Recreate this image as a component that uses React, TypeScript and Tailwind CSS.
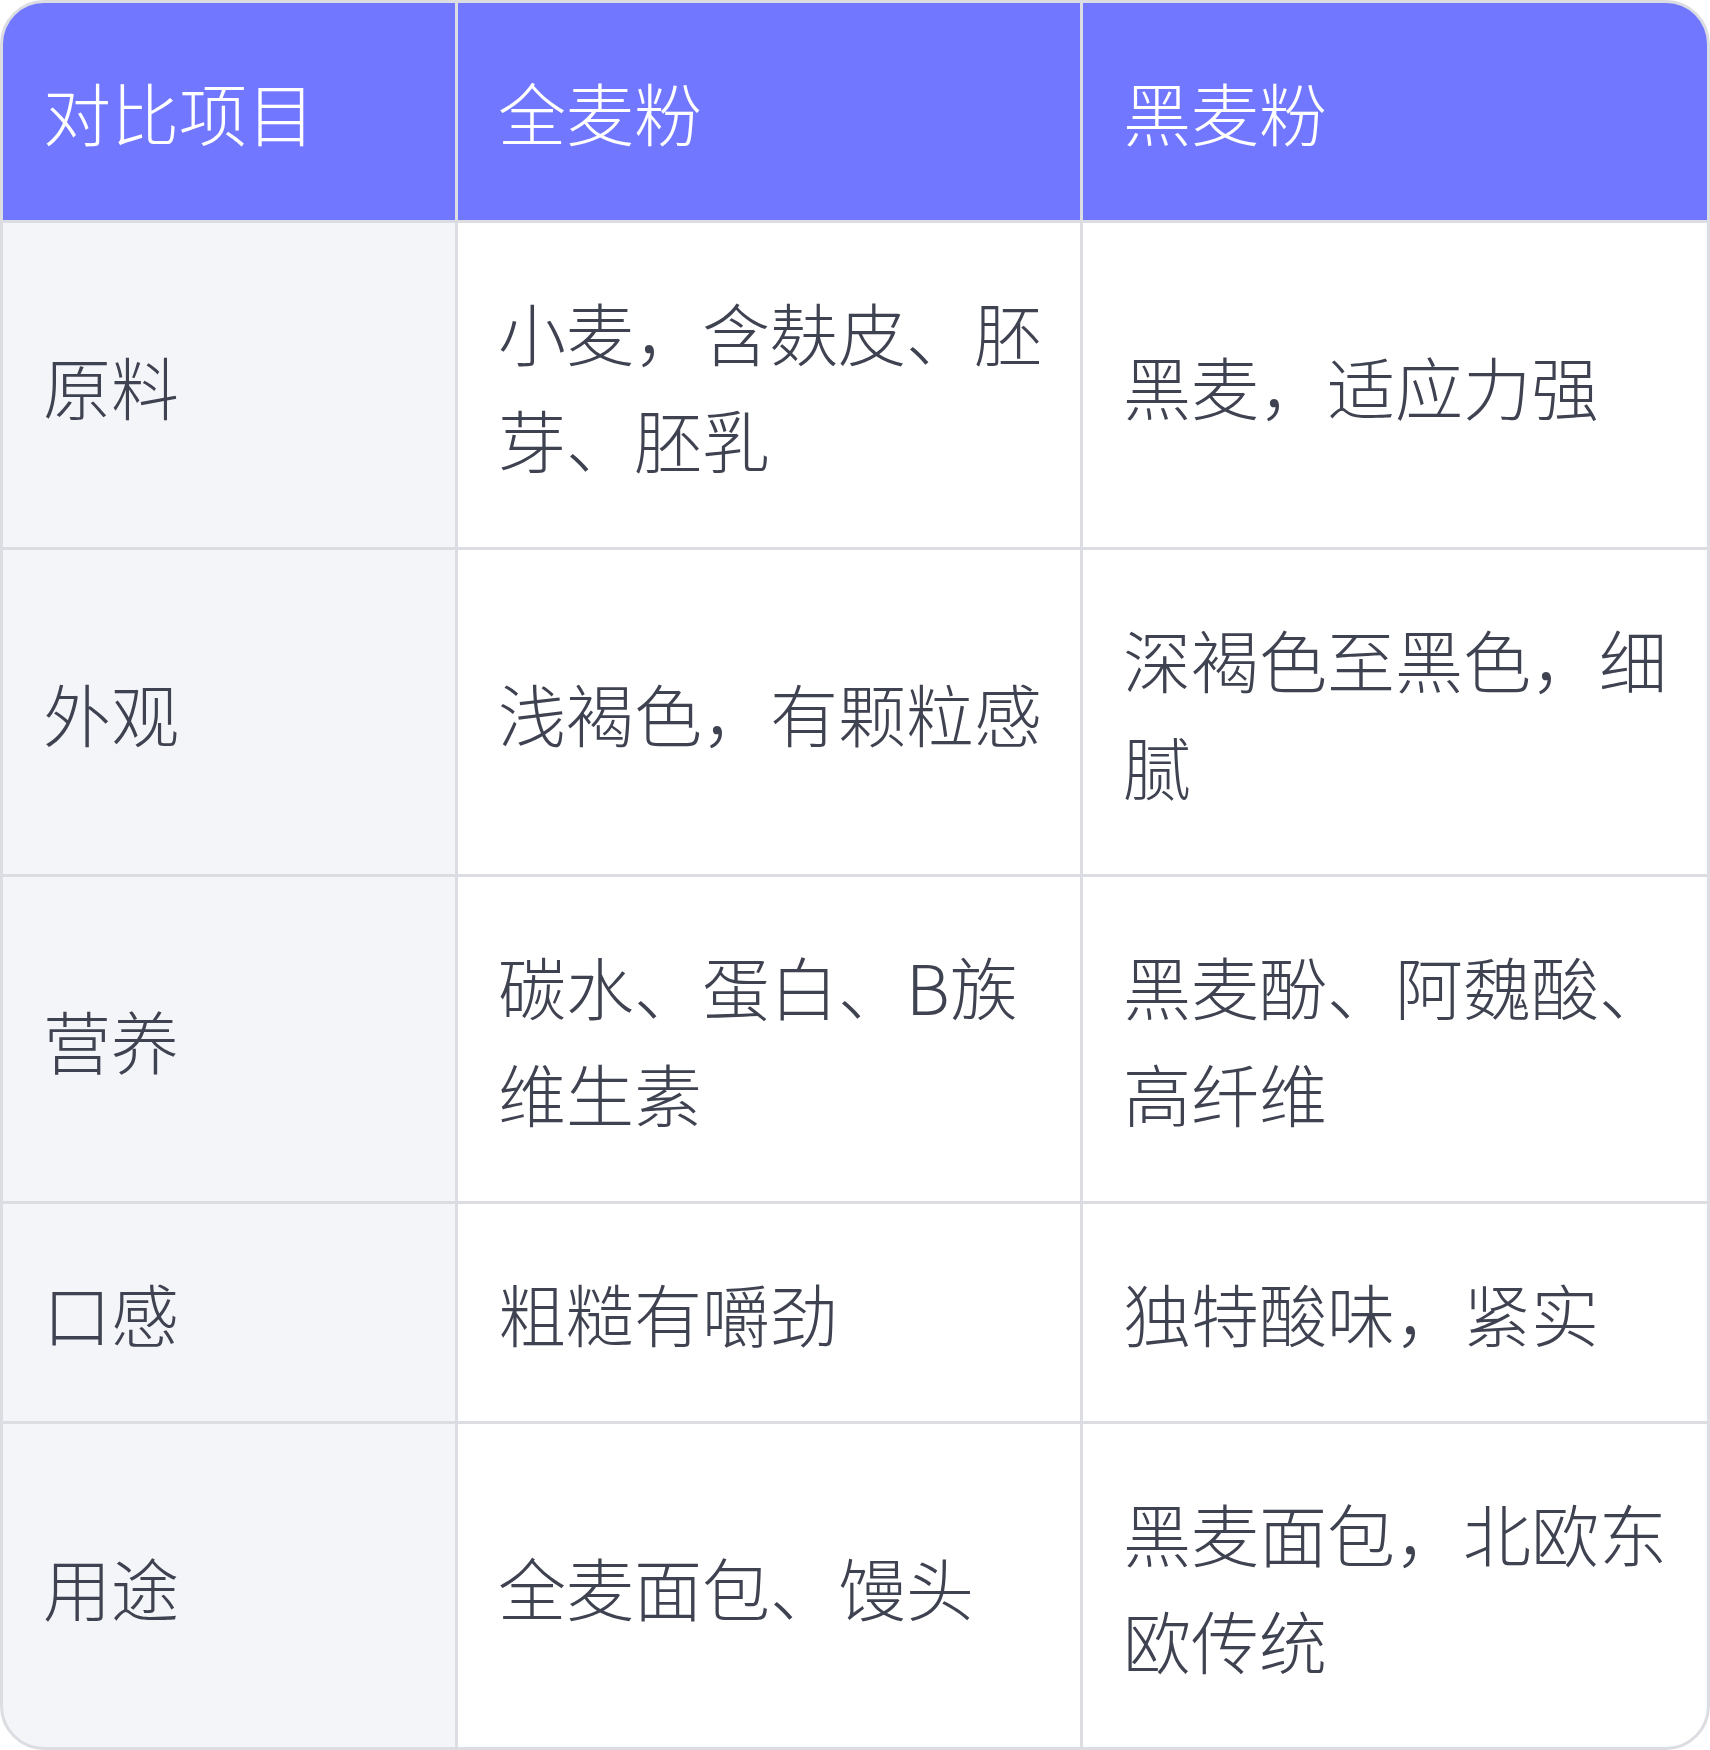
import React from "react";

const rows: [string, string, string][] = [
  ["原料", "小麦，含麸皮、胚芽、胚乳", "黑麦，适应力强"],
  ["外观", "浅褐色，有颗粒感", "深褐色至黑色，细腻"],
  ["营养", "碳水、蛋白、B族维生素", "黑麦酚、阿魏酸、高纤维"],
  ["口感", "粗糙有嚼劲", "独特酸味，紧实"],
  ["用途", "全麦面包、馒头", "黑麦面包，北欧东欧传统"],
];

const font = { fontFamily: '"Noto Sans CJK SC", "Noto Sans", sans-serif' };

export default function App() {
  return (
    <div className="w-[1710px] bg-white" style={font}>
      <div className="grid grid-cols-[452px_622px_1fr] gap-[3px] overflow-hidden rounded-[44px] border-[3px] border-[#dcdde3] bg-[#dcdde3] text-[68px] leading-[107px] font-light">
        {["对比项目", "全麦粉", "黑麦粉"].map((h) => (
          <div key={h} className="flex items-center bg-[#7177ff] py-[55px] pl-[40px] pr-[34px] text-white">
            {h}
          </div>
        ))}
        {rows.map((r, i) => {
          const py = i === rows.length - 1 ? "pt-[55px] pb-[54px]" : "py-[55px]";
          return (
            <React.Fragment key={r[0]}>
              <div className={`flex items-center bg-[#f4f5f9] ${py} pl-[40px] pr-[34px] text-[#3f4250]`}>
                {r[0]}
              </div>
              <div className={`flex items-center bg-white ${py} pl-[40px] pr-[34px] text-[#3f4250]`}>
                {r[1]}
              </div>
              <div className={`flex items-center bg-white ${py} pl-[40px] pr-[34px] text-[#3f4250]`}>
                {r[2]}
              </div>
            </React.Fragment>
          );
        })}
      </div>
    </div>
  );
}
